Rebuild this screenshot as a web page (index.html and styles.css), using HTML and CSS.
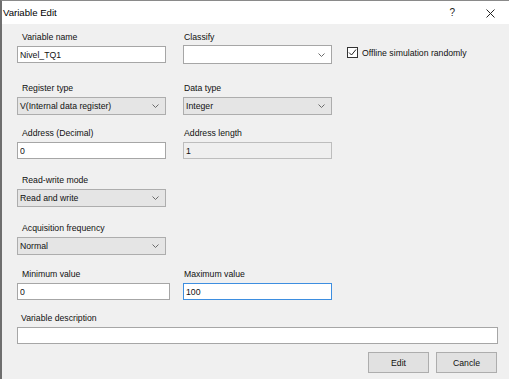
FILE: index.html
```html
<!DOCTYPE html>
<html lang="en">
  <head>
    <meta charset="UTF-8" />
    <title>Variable Edit</title>
    <link rel="stylesheet" href="styles.css">
  </head>
  <body>
    <div class="window">
      <div class="titlebar">
        <span class="title">Variable Edit</span>
        <span class="help">?</span>
        <svg class="close" width="9" height="9" viewBox="0 0 9 9">
          <path d="M0.5 0.5 L8.5 8.5 M8.5 0.5 L0.5 8.5" stroke="#222" stroke-width="1" fill="none" />
        </svg>
      </div>

      <div class="content">
        <div class="row row-first">
          <div class="field">
            <label class="lbl">Variable name</label>
            <input class="txt" type="text" value="Nivel_TQ1" />
          </div>
          <div class="field col2">
            <label class="lbl lbl-tight">Classify</label>
            <div class="combo combo-edit">
              <span></span>
              <svg class="chev" width="7" height="4" viewBox="0 0 7 4"><path d="M0.5 0.5 L3.5 3.5 L6.5 0.5" stroke="#6b6b6b" fill="none" /></svg>
            </div>
          </div>
          <div class="check">
            <span class="box">
              <svg width="9" height="9" viewBox="0 0 9 9"><path d="M1 4.5 L3.5 7 L8 1.5" stroke="#222" stroke-width="1" fill="none" /></svg>
            </span>
            <span>Offline simulation randomly</span>
          </div>
        </div>

        <div class="row row-2">
          <div class="field">
            <label class="lbl">Register type</label>
            <div class="combo">
              <span>V(Internal data register)</span>
              <svg class="chev" width="7" height="4" viewBox="0 0 7 4"><path d="M0.5 0.5 L3.5 3.5 L6.5 0.5" stroke="#6b6b6b" fill="none" /></svg>
            </div>
          </div>
          <div class="field col2">
            <label class="lbl lbl-tight">Data type</label>
            <div class="combo">
              <span>Integer</span>
              <svg class="chev" width="7" height="4" viewBox="0 0 7 4"><path d="M0.5 0.5 L3.5 3.5 L6.5 0.5" stroke="#6b6b6b" fill="none" /></svg>
            </div>
          </div>
        </div>

        <div class="row row-3">
          <div class="field">
            <label class="lbl">Address (Decimal)</label>
            <input class="txt" type="text" value="0" />
          </div>
          <div class="field col2">
            <label class="lbl lbl-tight">Address length</label>
            <input class="txt txt-off" type="text" value="1" disabled />
          </div>
        </div>

        <div class="row">
          <div class="field">
            <label class="lbl">Read-write mode</label>
            <div class="combo">
              <span>Read and write</span>
              <svg class="chev" width="7" height="4" viewBox="0 0 7 4"><path d="M0.5 0.5 L3.5 3.5 L6.5 0.5" stroke="#6b6b6b" fill="none" /></svg>
            </div>
          </div>
        </div>

        <div class="row">
          <div class="field">
            <label class="lbl">Acquisition frequency</label>
            <div class="combo">
              <span>Normal</span>
              <svg class="chev" width="7" height="4" viewBox="0 0 7 4"><path d="M0.5 0.5 L3.5 3.5 L6.5 0.5" stroke="#6b6b6b" fill="none" /></svg>
            </div>
          </div>
        </div>

        <div class="row row-6">
          <div class="field field-wide">
            <label class="lbl">Minimum value</label>
            <input class="txt" type="text" value="0" />
          </div>
          <div class="field col2-near">
            <label class="lbl lbl-tight">Maximum value</label>
            <input class="txt txt-focus" type="text" value="100" />
          </div>
        </div>

        <div class="row row-7">
          <div class="field field-full">
            <label class="lbl lbl-desc">Variable description</label>
            <input class="txt" type="text" value="" />
          </div>
        </div>

        <div class="buttons">
          <button type="button" class="btn">Edit</button>
          <button type="button" class="btn">Cancle</button>
        </div>
      </div>
    </div>
  </body>
</html>
```

FILE: styles.css
```css
* {
  box-sizing: border-box;
}
body {
  margin: 0;
  font-family: "Liberation Sans", Arial, sans-serif;
  font-size: 8.7px;
  color: #111;
  background: #f0f0f0;
}
.window {
  width: 509px;
  height: 379px;
  border-left: 2px solid #6e6e6e;
  border-top: 1px solid #8a8a8a;
  background: #f0f0f0;
  overflow: hidden;
}
.titlebar {
  height: 23px;
  background: #fff;
  display: flex;
  align-items: center;
  padding-left: 1px;
}
.title {
  font-size: 9.6px;
  color: #000;
  flex: 1;
}
.help {
  font-size: 10px;
  margin-right: 31px;
  color: #222;
}
.close {
  margin-right: 14px;
  margin-top: 1px;
}
.content {
  padding: 8px 11px 0 15px;
}
.row {
  display: flex;
  align-items: flex-start;
  margin-top: 16px;
}
.row-first {
  margin-top: 0;
}
.row-2 {
  margin-top: 19px;
}
.row-3 {
  margin-top: 13px;
}
.row-6 {
  margin-top: 14px;
}
.row-7 {
  margin-top: 13px;
}
.field {
  display: flex;
  flex-direction: column;
  width: 149px;
}
.field-wide {
  width: 153px;
}
.field-full {
  width: 481px;
}
.col2 {
  margin-left: 17px;
}
.col2-near {
  margin-left: 13px;
}
.lbl {
  height: 11px;
  line-height: 11px;
  margin-bottom: 3px;
  padding-left: 5px;
  white-space: nowrap;
}
.lbl-tight {
  padding-left: 1px;
}
.lbl-desc {
  padding-left: 4px;
}
.txt {
  height: 17px;
  width: 100%;
  border: 1px solid #a6a6a6;
  background: #fff;
  font-family: inherit;
  font-size: 8.7px;
  color: #111;
  padding: 0 2px;
  margin: 0;
  outline: none;
}
.txt-off {
  background: #efefef;
  border-color: #bdbdbd;
  color: #111;
}
.txt.txt-focus {
  border-color: #3d8ee0;
}
.combo {
  height: 18px;
  border: 1px solid #adadad;
  background: #e5e5e5;
  display: flex;
  align-items: center;
  justify-content: space-between;
  padding: 0 6px 0 2px;
}
.combo-edit {
  background: #fff;
  border-color: #a6a6a6;
  height: 19px;
  margin-top: -1px;
}
.chev {
  flex: none;
}
.check {
  display: flex;
  align-items: center;
  margin-left: 15px;
  margin-top: 15px;
  gap: 4px;
}
.box {
  width: 11px;
  height: 11px;
  border: 1px solid #333;
  background: #fff;
  display: flex;
  align-items: center;
  justify-content: center;
}
.buttons {
  display: flex;
  justify-content: flex-end;
  gap: 7px;
  margin-top: 8px;
  padding-right: 1px;
}
.btn {
  width: 61px;
  height: 21px;
  border: 1px solid #adadad;
  background: #e1e1e1;
  font-family: inherit;
  font-size: 8.7px;
  color: #111;
  padding: 0;
}
```
